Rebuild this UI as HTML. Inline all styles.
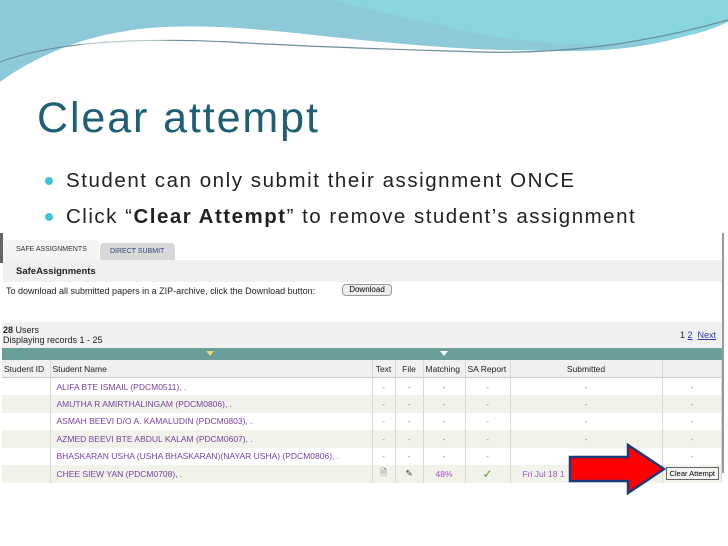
<!DOCTYPE html>
<html><head><style>
*{margin:0;padding:0;box-sizing:border-box}
body{width:728px;height:546px;background:#fff;position:relative;overflow:hidden;font-family:"Liberation Sans",sans-serif}
.abs{position:absolute}
.t{font-size:9px;color:#222}
table{border-collapse:collapse;position:absolute;left:2px;top:360px;width:720px;font-size:8.5px;font-family:"Liberation Sans",sans-serif}
td{height:17.5px;border-right:1px solid #d8d8d8;padding:0 2px;white-space:nowrap;overflow:hidden}
td.c{text-align:center;color:#888}
td.n{color:#7a3fa0;padding-left:6px}
tr:nth-child(odd) td{background:#f1f3ea}
tr.h td{background:#f0f0f0;color:#222;border-bottom:1px solid #ccc}
</style></head><body>
<svg class="abs" style="left:0;top:0" width="728" height="90">
<path d="M0 0H728V20C640 60 560 50 500 50C350 45 250 20 150 28C80 34 30 60 0 82Z" fill="#8dc9d9"/>
<path d="M330 0H728V22C690 40 630 50 540 42C480 38 420 20 330 0Z" fill="#88d4df"/>
<path d="M0 62C60 40 150 38 230 42C330 48 420 50 480 52C560 54 640 45 728 20" stroke="#6a8f99" stroke-width="1.2" fill="none"/>
<path d="M0 82C30 60 80 40 150 30L170 40C90 45 40 62 0 82Z" fill="#fff" opacity=".5"/>
</svg>
<div class="abs" style="left:37px;top:94px;font-size:43px;color:#1f5f73;letter-spacing:1.9px">Clear attempt</div>
<div class="abs" style="left:45px;top:177px;width:8px;height:8px;border-radius:50%;background:#3cc6d6"></div>
<div class="abs" style="left:45px;top:213px;width:8px;height:8px;border-radius:50%;background:#3cc6d6"></div>
<div class="abs" style="left:66px;top:169px;font-size:20.5px;color:#222;letter-spacing:1.55px">Student can only submit their assignment ONCE</div>
<div class="abs" style="left:66px;top:205px;font-size:20.5px;color:#222;letter-spacing:1.5px">Click “<b>Clear Attempt</b>” to remove student’s assignment</div>
<div class="abs" style="left:722px;top:233px;width:2px;height:240px;background:#999"></div>
<div class="abs" style="left:0;top:233px;width:3px;height:30px;background:#666"></div>
<div class="abs" style="left:3px;top:240px;width:96px;height:20px;background:#f4f4f4;border-radius:4px 4px 0 0;font-size:7px;color:#333;padding:6px 0 0 13px">SAFE ASSIGNMENTS</div>
<div class="abs" style="left:100px;top:243px;width:75px;height:17px;background:#d8d8d8;border-radius:4px 4px 0 0;font-size:7px;color:#2a4a7a;padding:5px 0 0 10px">DIRECT SUBMIT</div>
<div class="abs" style="left:3px;top:260px;width:719px;height:22px;background:#f0f0f0;font-size:9.5px;font-weight:bold;color:#222;padding:6px 0 0 13px">SafeAssignments</div>
<div class="abs t" style="left:6px;top:286px">To download all submitted papers in a ZIP-archive, click the Download button:</div>
<div class="abs" style="left:342px;top:284px;width:50px;height:12px;background:#eee;border:1px solid #999;border-radius:4px;font-size:8px;text-align:center;line-height:10px">Download</div>
<div class="abs" style="left:2px;top:322px;width:720px;height:26px;background:#f0f0f0"></div>
<div class="abs t" style="left:3px;top:325px"><b>28</b> Users<br>Displaying records 1 - 25</div>
<div class="abs t" style="left:680px;top:330px">1 <u style="color:#2a3a9a">2</u> &nbsp;<u style="color:#2a3a9a">Next</u></div>
<div class="abs" style="left:2px;top:348px;width:720px;height:12px;background:#6a9e9a"></div>
<div class="abs" style="left:206px;top:351px;border:4px solid transparent;border-top:5px solid #f0d070"></div>
<div class="abs" style="left:440px;top:351px;border:4px solid transparent;border-top:5px solid #fff"></div>
<table>
<tr class="h"><td style="width:48px">Student ID</td><td style="width:322px">Student Name</td><td style="width:23px;text-align:center">Text</td><td style="width:28px;text-align:center">File</td><td style="width:42px">Matching</td><td style="width:45px">SA Report</td><td style="width:152px;text-align:center">Submitted</td><td></td></tr>
<tr><td></td><td class="n">ALIFA BTE ISMAIL (PDCM0511), .</td><td class="c">-</td><td class="c">-</td><td class="c">-</td><td class="c">-</td><td class="c">-</td><td class="c">-</td></tr>
<tr><td></td><td class="n">AMUTHA R AMIRTHALINGAM (PDCM0806), .</td><td class="c">-</td><td class="c">-</td><td class="c">-</td><td class="c">-</td><td class="c">-</td><td class="c">-</td></tr>
<tr><td></td><td class="n">ASMAH BEEVI D/O A. KAMALUDIN (PDCM0803), .</td><td class="c">-</td><td class="c">-</td><td class="c">-</td><td class="c">-</td><td class="c">-</td><td class="c">-</td></tr>
<tr><td></td><td class="n">AZMED BEEVI BTE ABDUL KALAM (PDCM0607), .</td><td class="c">-</td><td class="c">-</td><td class="c">-</td><td class="c">-</td><td class="c">-</td><td class="c">-</td></tr>
<tr><td></td><td class="n">BHASKARAN USHA (USHA BHASKARAN)(NAYAR USHA) (PDCM0806), .</td><td class="c">-</td><td class="c">-</td><td class="c">-</td><td class="c">-</td><td class="c">-</td><td class="c">-</td></tr>
<tr><td></td><td class="n">CHEE SIEW YAN (PDCM0708), .</td><td class="c" style="color:#555">🗎</td><td class="c" style="color:#333">✎</td><td class="c" style="color:#a050c0">48%</td><td class="c" style="color:#5a9a20;font-size:12px">✓</td><td style="color:#a050c0;padding-left:12px">Fri Jul 18 1</td><td style="text-align:right"><span style="display:inline-block;border:1px solid #666;background:#f4f4f4;font-size:7.5px;padding:1px 3px">Clear Attempt</span></td></tr>
</table>
<svg class="abs" style="left:568px;top:443px" width="100" height="52">
<path d="M2 14H60V2L96 26L60 50V38H2Z" fill="#f00" stroke="#1f3a7a" stroke-width="2.5"/>
</svg>
</body></html>
